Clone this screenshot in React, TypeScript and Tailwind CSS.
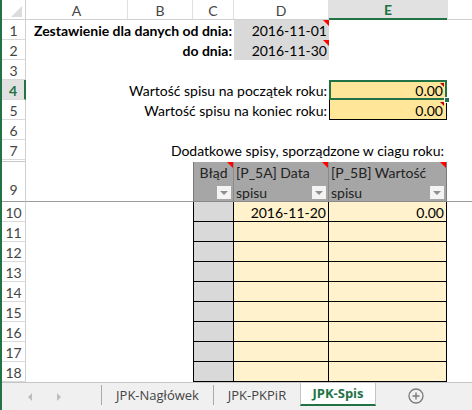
import React from "react";

const Tri = ({ small }: { small?: boolean }) => (
  <span
    className={
      small
        ? "absolute top-[2px] right-[2px] w-0 h-0 border-t-[4px] border-l-[4px] border-l-transparent border-t-[#c00000]"
        : "absolute top-0 right-0 w-0 h-0 border-t-[6px] border-l-[6px] border-l-transparent border-t-[#ff0000]"
    }
  />
);

const Filter = () => (
  <span className="absolute right-[2px] bottom-[2px] w-[14px] h-[13px] bg-[#f4f4f4] flex items-center justify-center">
    <span className="w-0 h-0 border-x-[4px] border-x-transparent border-t-[4px] border-t-[#8f8f8f]" />
  </span>
);

const RH = ({ n, active, tall }: { n: string; active?: boolean; tall?: boolean }) => (
  <div
    className={
      active
        ? "w-[24px] shrink-0 h-full bg-[#e1e1e1] border-r-2 border-r-[#217346] border-b border-b-[#dadada] flex items-center justify-center pt-[2px] font-bold text-[#217346]"
        : tall
        ? "w-[24px] shrink-0 h-full border-r border-r-[#d0d0d0] border-b border-b-[#9c9c9c] flex items-end justify-center pb-[1px] text-[#444]"
        : "w-[24px] shrink-0 h-full border-r border-r-[#d0d0d0] border-b border-b-[#dadada] flex items-center justify-center pt-[2px] text-[#444]"
    }
  >
    {n}
  </div>
);

const BodyRow = ({ n, d, e }: { n: string; d?: string; e?: string }) => (
  <div className="flex h-[20px]">
    <RH n={n} />
    <div className="w-[167px] shrink-0" />
    <div className="w-[41px] shrink-0 bg-[#d9d9d9] border-l border-r border-b border-black" />
    <div className="w-[95px] shrink-0 bg-[#fff2cc] border-r border-b border-black text-right pr-[2px] leading-[20px] pt-[1px]">
      {d}
    </div>
    <div className="w-[118px] shrink-0 bg-[#fff2cc] border-r border-b border-black text-right pr-[2px] leading-[20px] pt-[1px]">
      {e}
    </div>
    <div className="flex-1" />
  </div>
);

export default function App() {
  return (
    <div className="w-[472px] h-[410px] overflow-hidden flex flex-col bg-white border-l-2 border-l-[#217346] font-[Lato,sans-serif] text-[14px] text-black">
      {/* column headers */}
      <div className="flex h-[20px] shrink-0 border-b border-b-[#d0d0d0] text-[#444]">
        <div className="w-[24px] shrink-0 border-r border-r-[#d0d0d0] relative">
          <span className="absolute right-[3px] bottom-[2px] w-0 h-0 border-l-[11px] border-l-transparent border-b-[11px] border-b-[#dcdcdc]" />
        </div>
        <div className="w-[102px] shrink-0 border-r border-r-[#e0e0e0] flex items-center justify-center pt-[1px]">A</div>
        <div className="w-[65px] shrink-0 border-r border-r-[#e0e0e0] flex items-center justify-center pt-[1px]">B</div>
        <div className="w-[41px] shrink-0 border-r border-r-[#e0e0e0] flex items-center justify-center pt-[1px]">C</div>
        <div className="w-[95px] shrink-0 border-r border-r-[#e0e0e0] flex items-center justify-center pt-[1px]">D</div>
        <div className="w-[118px] shrink-0 bg-[#e1e1e1] border-b-2 border-b-[#217346] flex items-center justify-center pt-[1px] font-bold text-[#217346] -mb-[1px]">
          E
        </div>
        <div className="flex-1 border-l border-l-[#e0e0e0]" />
      </div>

      {/* row 1 */}
      <div className="flex h-[20px] shrink-0">
        <RH n="1" />
        <div className="w-[208px] shrink-0 text-right pr-[2px] font-bold leading-[20px] pt-[1px] whitespace-nowrap">
          Zestawienie dla danych od dnia:
        </div>
        <div className="w-[95px] shrink-0 bg-[#d9d9d9] relative text-right pr-[2px] leading-[20px] pt-[1px]">
          2016-11-01
          <Tri />
        </div>
        <div className="flex-1" />
      </div>

      {/* row 2 */}
      <div className="flex h-[20px] shrink-0">
        <RH n="2" />
        <div className="w-[208px] shrink-0 text-right pr-[2px] font-bold leading-[20px] pt-[1px]">do dnia:</div>
        <div className="w-[95px] shrink-0 bg-[#d9d9d9] relative text-right pr-[2px] leading-[20px] pt-[1px]">
          2016-11-30
          <Tri />
        </div>
        <div className="flex-1" />
      </div>

      {/* row 3 */}
      <div className="flex h-[20px] shrink-0">
        <RH n="3" />
        <div className="flex-1" />
      </div>

      {/* row 4 */}
      <div className="flex h-[20px] shrink-0">
        <RH n="4" active />
        <div className="w-[303px] shrink-0 text-right pr-[2px] leading-[20px] pt-[1px] whitespace-nowrap">
          Wartość spisu na początek roku:
        </div>
        <div className="w-[118px] shrink-0 bg-[#ffe699] border border-black relative text-right pr-[3px] leading-[18px] pt-[1px]">
          0.00
          <Tri small />
          <span className="absolute -left-[1px] -top-[1px] -right-[1px] -bottom-[1px] border-2 border-[#217346]" />
          <span className="absolute -right-[4px] -bottom-[4px] w-[6px] h-[6px] bg-[#217346] border border-white z-10" />
        </div>
        <div className="flex-1" />
      </div>

      {/* row 5 */}
      <div className="flex h-[20px] shrink-0">
        <RH n="5" />
        <div className="w-[303px] shrink-0 text-right pr-[2px] leading-[20px] pt-[1px] whitespace-nowrap">
          Wartość spisu na koniec roku:
        </div>
        <div className="w-[118px] shrink-0 bg-[#ffe699] border-x border-b border-black relative text-right pr-[3px] leading-[19px] pt-[1px]">
          0.00
          <Tri small />
        </div>
        <div className="flex-1" />
      </div>

      {/* row 6 */}
      <div className="flex h-[20px] shrink-0">
        <RH n="6" />
        <div className="flex-1" />
      </div>

      {/* row 7 */}
      <div className="flex h-[20px] shrink-0">
        <RH n="7" />
        <div className="w-[421px] shrink-0 text-right pr-[3px] leading-[20px] pt-[1px] whitespace-nowrap">
          Dodatkowe spisy, sporządzone w ciagu roku:
        </div>
        <div className="flex-1" />
      </div>

      {/* row 8 (hidden) */}
      <div className="flex h-[2px] shrink-0">
        <div className="w-[24px] shrink-0 h-full border-r border-r-[#d0d0d0] border-b border-b-[#c8c8c8]" />
        <div className="flex-1" />
      </div>

      {/* row 9 - table header */}
      <div className="flex h-[40px] shrink-0">
        <RH n="9" tall />
        <div className="w-[167px] shrink-0 border-b border-b-[#9c9c9c]" />
        <div className="w-[41px] shrink-0 bg-[#a6a6a6] border-l border-l-[#7a7a7a] border-r border-r-[#8a8a8a] border-b border-b-[#8a8a8a] relative text-center leading-[20px] pt-[1px] text-[#222]">
          Błąd
          <Tri />
          <Filter />
        </div>
        <div className="w-[95px] shrink-0 bg-[#a6a6a6] border-r border-r-[#8a8a8a] border-b border-b-[#8a8a8a] relative text-left pl-[2px] leading-[20px] pt-[1px] text-[#222] whitespace-nowrap">
          [P_5A] Data
          <br />
          spisu
          <Tri />
          <Filter />
        </div>
        <div className="w-[118px] shrink-0 bg-[#a6a6a6] border-r border-r-[#7a7a7a] border-b border-b-[#8a8a8a] relative text-left pl-[2px] leading-[20px] pt-[1px] text-[#222] whitespace-nowrap">
          [P_5B] Wartość
          <br />
          spisu
          <Tri />
          <Filter />
        </div>
        <div className="flex-1 border-b border-b-[#9c9c9c]" />
      </div>

      <BodyRow n="10" d="2016-11-20" e="0.00" />
      <BodyRow n="11" />
      <BodyRow n="12" />
      <BodyRow n="13" />
      <BodyRow n="14" />
      <BodyRow n="15" />
      <BodyRow n="16" />
      <BodyRow n="17" />
      <BodyRow n="18" />

      {/* sheet tabs */}
      <div className="flex h-[28px] shrink-0 bg-[#f0f0f0] border-t border-t-[#c6c6c6] font-['Open_Sans',sans-serif] text-[13px] text-[#444]">
        <div className="w-[99px] shrink-0 flex items-center">
          <span className="ml-[26px] w-0 h-0 border-y-[4px] border-y-transparent border-r-[4px] border-r-[#bdbdbd]" />
          <span className="ml-[25px] w-0 h-0 border-y-[4px] border-y-transparent border-l-[4px] border-l-[#bdbdbd]" />
        </div>
        <div className="w-px h-[20px] mt-[2px] bg-[#ababab] shrink-0" />
        <div className="w-[111px] shrink-0 flex items-center justify-center pb-[1px]">JPK-Nagłówek</div>
        <div className="w-px h-[20px] mt-[2px] bg-[#ababab] shrink-0" />
        <div className="w-[86px] shrink-0 flex items-center justify-center pb-[1px]">JPK-PKPiR</div>
        <div className="w-[76px] shrink-0 h-[23px] bg-white border-x border-x-[#c6c6c6] border-b-2 border-b-[#217346] flex items-center justify-center font-bold text-[#217346]">
          JPK-Spis
        </div>
        <div className="flex-1 flex items-center">
          <svg width="16" height="16" viewBox="0 0 16 16" className="ml-[32px] mb-[1px]">
            <circle cx="8" cy="8" r="7" fill="none" stroke="#7a7a7a" strokeWidth="1.3" />
            <path d="M8 4.5v7M4.5 8h7" stroke="#7a7a7a" strokeWidth="1.4" />
          </svg>
        </div>
      </div>
    </div>
  );
}
